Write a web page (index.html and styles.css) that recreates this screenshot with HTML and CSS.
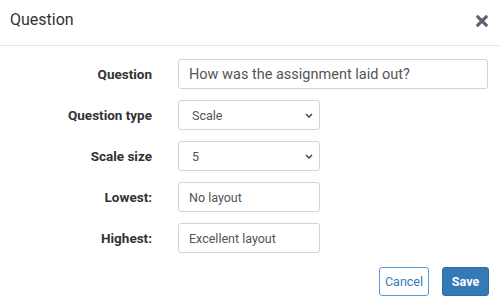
FILE: index.html
```html
<!DOCTYPE html>
<html lang="en">
    <head>
        <meta charset="UTF-8">
        <meta name="viewport" content="width=device-width, initial-scale=1.0">
        <title>Question</title>

        <!-- CSS -->
        <link rel="stylesheet" href="styles.css">
    </head>
    <body>
        <div class="modal">
            <div class="modal-header">
                <h4 class="modal-title">Question</h4>
                <button class="close-btn" type="button" aria-label="Close">
                    <svg width="12" height="12" viewBox="0 0 12 12">
                        <path d="M1.8 1.8 L10.2 10.2 M10.2 1.8 L1.8 10.2" stroke="#5d6370" stroke-width="3.2" stroke-linecap="round"/>
                    </svg>
                </button>
            </div>

            <form class="modal-body">
                <div class="form-row">
                    <label class="form-label">Question</label>
                    <input class="form-control wide" type="text" value="How was the assignment laid out?">
                </div>
                <div class="form-row">
                    <label class="form-label">Question type</label>
                    <select class="form-control form-select">
                        <option>Scale</option>
                        <option>Text</option>
                    </select>
                </div>
                <div class="form-row">
                    <label class="form-label">Scale size</label>
                    <select class="form-control form-select">
                        <option>5</option>
                        <option>3</option>
                        <option>10</option>
                    </select>
                </div>
                <div class="form-row">
                    <label class="form-label">Lowest:</label>
                    <input class="form-control" type="text" value="No layout">
                </div>
                <div class="form-row">
                    <label class="form-label">Highest:</label>
                    <input class="form-control" type="text" value="Excellent layout">
                </div>
            </form>

            <div class="modal-footer">
                <button class="btn btn-default" type="button">Cancel</button>
                <button class="btn btn-primary" type="button">Save</button>
            </div>
        </div>
    </body>
</html>
```

FILE: styles.css
```css
* {
    margin: 0;
    padding: 0;
    box-sizing: border-box;
    font-family: Roboto, "Liberation Sans", Arial, sans-serif;
}

body {
    background: #fff;
    color: #333;
}

.modal {
    width: 500px;
}

/* cabecalho */
.modal-header {
    display: flex;
    justify-content: space-between;
    align-items: center;
    height: 46px;
    padding: 0 12px 6px 10px;
    border-bottom: 1px solid #e5e5e5;
}

.modal-title {
    font-size: 16px;
    font-weight: normal;
    color: #333;
}

.close-btn {
    display: flex;
    background: none;
    border: none;
    cursor: pointer;
    margin-top: 2px;
}

/* formulario */
.modal-body {
    display: flex;
    flex-direction: column;
    gap: 11px;
    padding: 13px 12px 0 0;
}

.form-row {
    display: grid;
    grid-template-columns: 152px 1fr;
    column-gap: 26px;
    align-items: center;
}

.form-label {
    text-align: right;
    font-size: 13.5px;
    font-weight: bold;
    color: #333;
}

.form-control {
    width: 142px;
    height: 30px;
    padding: 0 10px;
    border: 1px solid #d4d4d4;
    border-radius: 3px;
    font-size: 12.5px;
    color: #555;
    background: #fff;
    outline: none;
}

.form-control.wide {
    width: 310px;
    font-size: 14.5px;
}

.form-select {
    appearance: none;
    padding-left: 13px;
    background-image: url("data:image/svg+xml,%3Csvg xmlns='http://www.w3.org/2000/svg' width='8' height='5' viewBox='0 0 8 5'%3E%3Cpath d='M1 1 L4 4 L7 1' fill='none' stroke='%23444' stroke-width='1.5'/%3E%3C/svg%3E");
    background-repeat: no-repeat;
    background-position: right 6px center;
}

/* rodape */
.modal-footer {
    display: flex;
    justify-content: flex-end;
    gap: 13px;
    padding: 14px 11px 0 0;
}

.btn {
    height: 29px;
    border-radius: 3px;
    font-size: 12.5px;
    cursor: pointer;
}

.btn-default {
    width: 50px;
    background: #fff;
    color: #337ab7;
    border: 1px solid #5b9bd5;
}

.btn-primary {
    width: 47px;
    background: #337ab7;
    color: #fff;
    border: 1px solid #2e6da4;
    font-weight: bold;
}
```
